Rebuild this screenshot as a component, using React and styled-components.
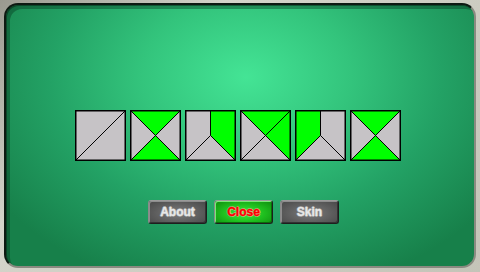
import React from "react";
import styled, { createGlobalStyle } from "styled-components";

const GlobalStyle = createGlobalStyle`
  html, body {
    margin: 0;
    padding: 0;
    width: 480px;
    height: 272px;
    overflow: hidden;
    background: #cdcdc2;
    font-family: "Liberation Sans", Arial, sans-serif;
  }
`;

const Screen = styled.div`
  width: 480px;
  height: 272px;
  box-sizing: border-box;
  padding: 3px 4px 4px 4px;
  background: linear-gradient(135deg, #9a9a90 0%, #d4d4ca 30%, #c4c4b8 100%);
`;

const Panel = styled.div`
  height: 100%;
  box-sizing: border-box;
  border-radius: 14px;
  border-top: 2px solid #0d1a12;
  border-left: 2px solid #0d1a12;
  border-right: 2px solid #8a8a80;
  border-bottom: 2px solid #8a8a80;
  background: radial-gradient(
    ellipse 300px 220px at 240px 72px,
    #44e495 0%,
    #33c47c 35%,
    #23a265 65%,
    #17804a 100%
  );
  box-shadow: inset 4px 4px 0 rgba(0, 40, 20, 0.35), inset 1px 1px 0 rgba(0, 0, 0, 0.4);
  display: flex;
  flex-direction: column;
  align-items: center;
  padding-top: 105px;
`;

const TileRow = styled.div`
  display: flex;
  gap: 4px;
  margin-left: -5px;
`;

const Tile = styled.svg`
  display: block;
  width: 51px;
  height: 51px;
`;

const ButtonRow = styled.div`
  display: flex;
  gap: 7px;
  margin-top: 39px;
  margin-left: 7px;
`;

const Button = styled.div`
  width: 59px;
  height: 24px;
  box-sizing: border-box;
  border-radius: 3px;
  border: 1px solid #1e1e1e;
  border-top-color: #9a9a9a;
  border-left-color: #8a8a8a;
  background: ${(p) =>
    p.active
      ? "radial-gradient(ellipse at 50% 55%, #3cf03c 0%, #1fc01f 50%, #0e8a0e 100%)"
      : "radial-gradient(ellipse at 50% 55%, #7c7c7c 0%, #5e5e5e 55%, #474747 100%)"};
  box-shadow: inset 1px 1px 0 ${(p) => (p.active ? "#7ae87a" : "#8d8d8d")},
    inset -1px -1px 0 ${(p) => (p.active ? "#0a6a0a" : "#333")};
  display: flex;
  align-items: center;
  justify-content: center;
  font-weight: bold;
  font-size: 12px;
  color: ${(p) => (p.active ? "#ff0000" : "#e8e8e8")};
  -webkit-text-stroke: 0.4px ${(p) => (p.active ? "#ff0000" : "#e8e8e8")};
  text-shadow: ${(p) =>
    p.active
      ? "1px 0 0 rgba(255,200,200,0.5), -1px 0 0 rgba(255,200,200,0.5), 0 1px 0 rgba(255,200,200,0.5), 0 -1px 0 rgba(255,200,200,0.5)"
      : "1px 0 0 #8a8a8a, -1px 0 0 #8a8a8a, 0 1px 0 #8a8a8a, 0 -1px 0 #8a8a8a"};
`;

const GREY = "#c6c3c6";
const GREEN = "#00ff00";

const shapes = [
  { green: [], lines: ["M0 51 L51 0"] },
  {
    green: ["0,0 51,0 25.5,25.5", "0,51 51,51 25.5,25.5"],
    lines: ["M0 0 L51 51", "M51 0 L0 51"],
  },
  {
    green: ["25.5,0 51,0 51,51 25.5,25.5"],
    lines: ["M25.5 0 L25.5 25.5", "M25.5 25.5 L0 51", "M25.5 25.5 L51 51"],
  },
  {
    green: ["0,0 51,0 25.5,25.5", "51,0 51,51 25.5,25.5"],
    lines: ["M0 0 L51 51", "M51 0 L0 51"],
  },
  {
    green: ["0,0 25.5,0 25.5,25.5 0,51"],
    lines: ["M25.5 0 L25.5 25.5", "M25.5 25.5 L0 51", "M25.5 25.5 L51 51"],
  },
  {
    green: ["0,0 51,0 25.5,25.5", "0,51 51,51 25.5,25.5"],
    lines: ["M0 0 L51 51", "M51 0 L0 51"],
  },
];

function Piece({ shape }) {
  return (
    <Tile viewBox="0 0 51 51">
      <rect x="0" y="0" width="51" height="51" fill={GREY} />
      {shape.green.map((pts) => (
        <polygon key={pts} points={pts} fill={GREEN} />
      ))}
      {shape.lines.map((d) => (
        <path key={d} d={d} stroke="#000" strokeWidth="1" fill="none" />
      ))}
      <rect x="0.75" y="0.75" width="49.5" height="49.5" fill="none" stroke="#000" strokeWidth="1.5" />
    </Tile>
  );
}

export default function App() {
  return (
    <>
      <GlobalStyle />
      <Screen>
        <Panel>
          <TileRow>
            {shapes.map((s, i) => (
              <Piece key={i} shape={s} />
            ))}
          </TileRow>
          <ButtonRow>
            <Button>About</Button>
            <Button active>Close</Button>
            <Button>Skin</Button>
          </ButtonRow>
        </Panel>
      </Screen>
    </>
  );
}
